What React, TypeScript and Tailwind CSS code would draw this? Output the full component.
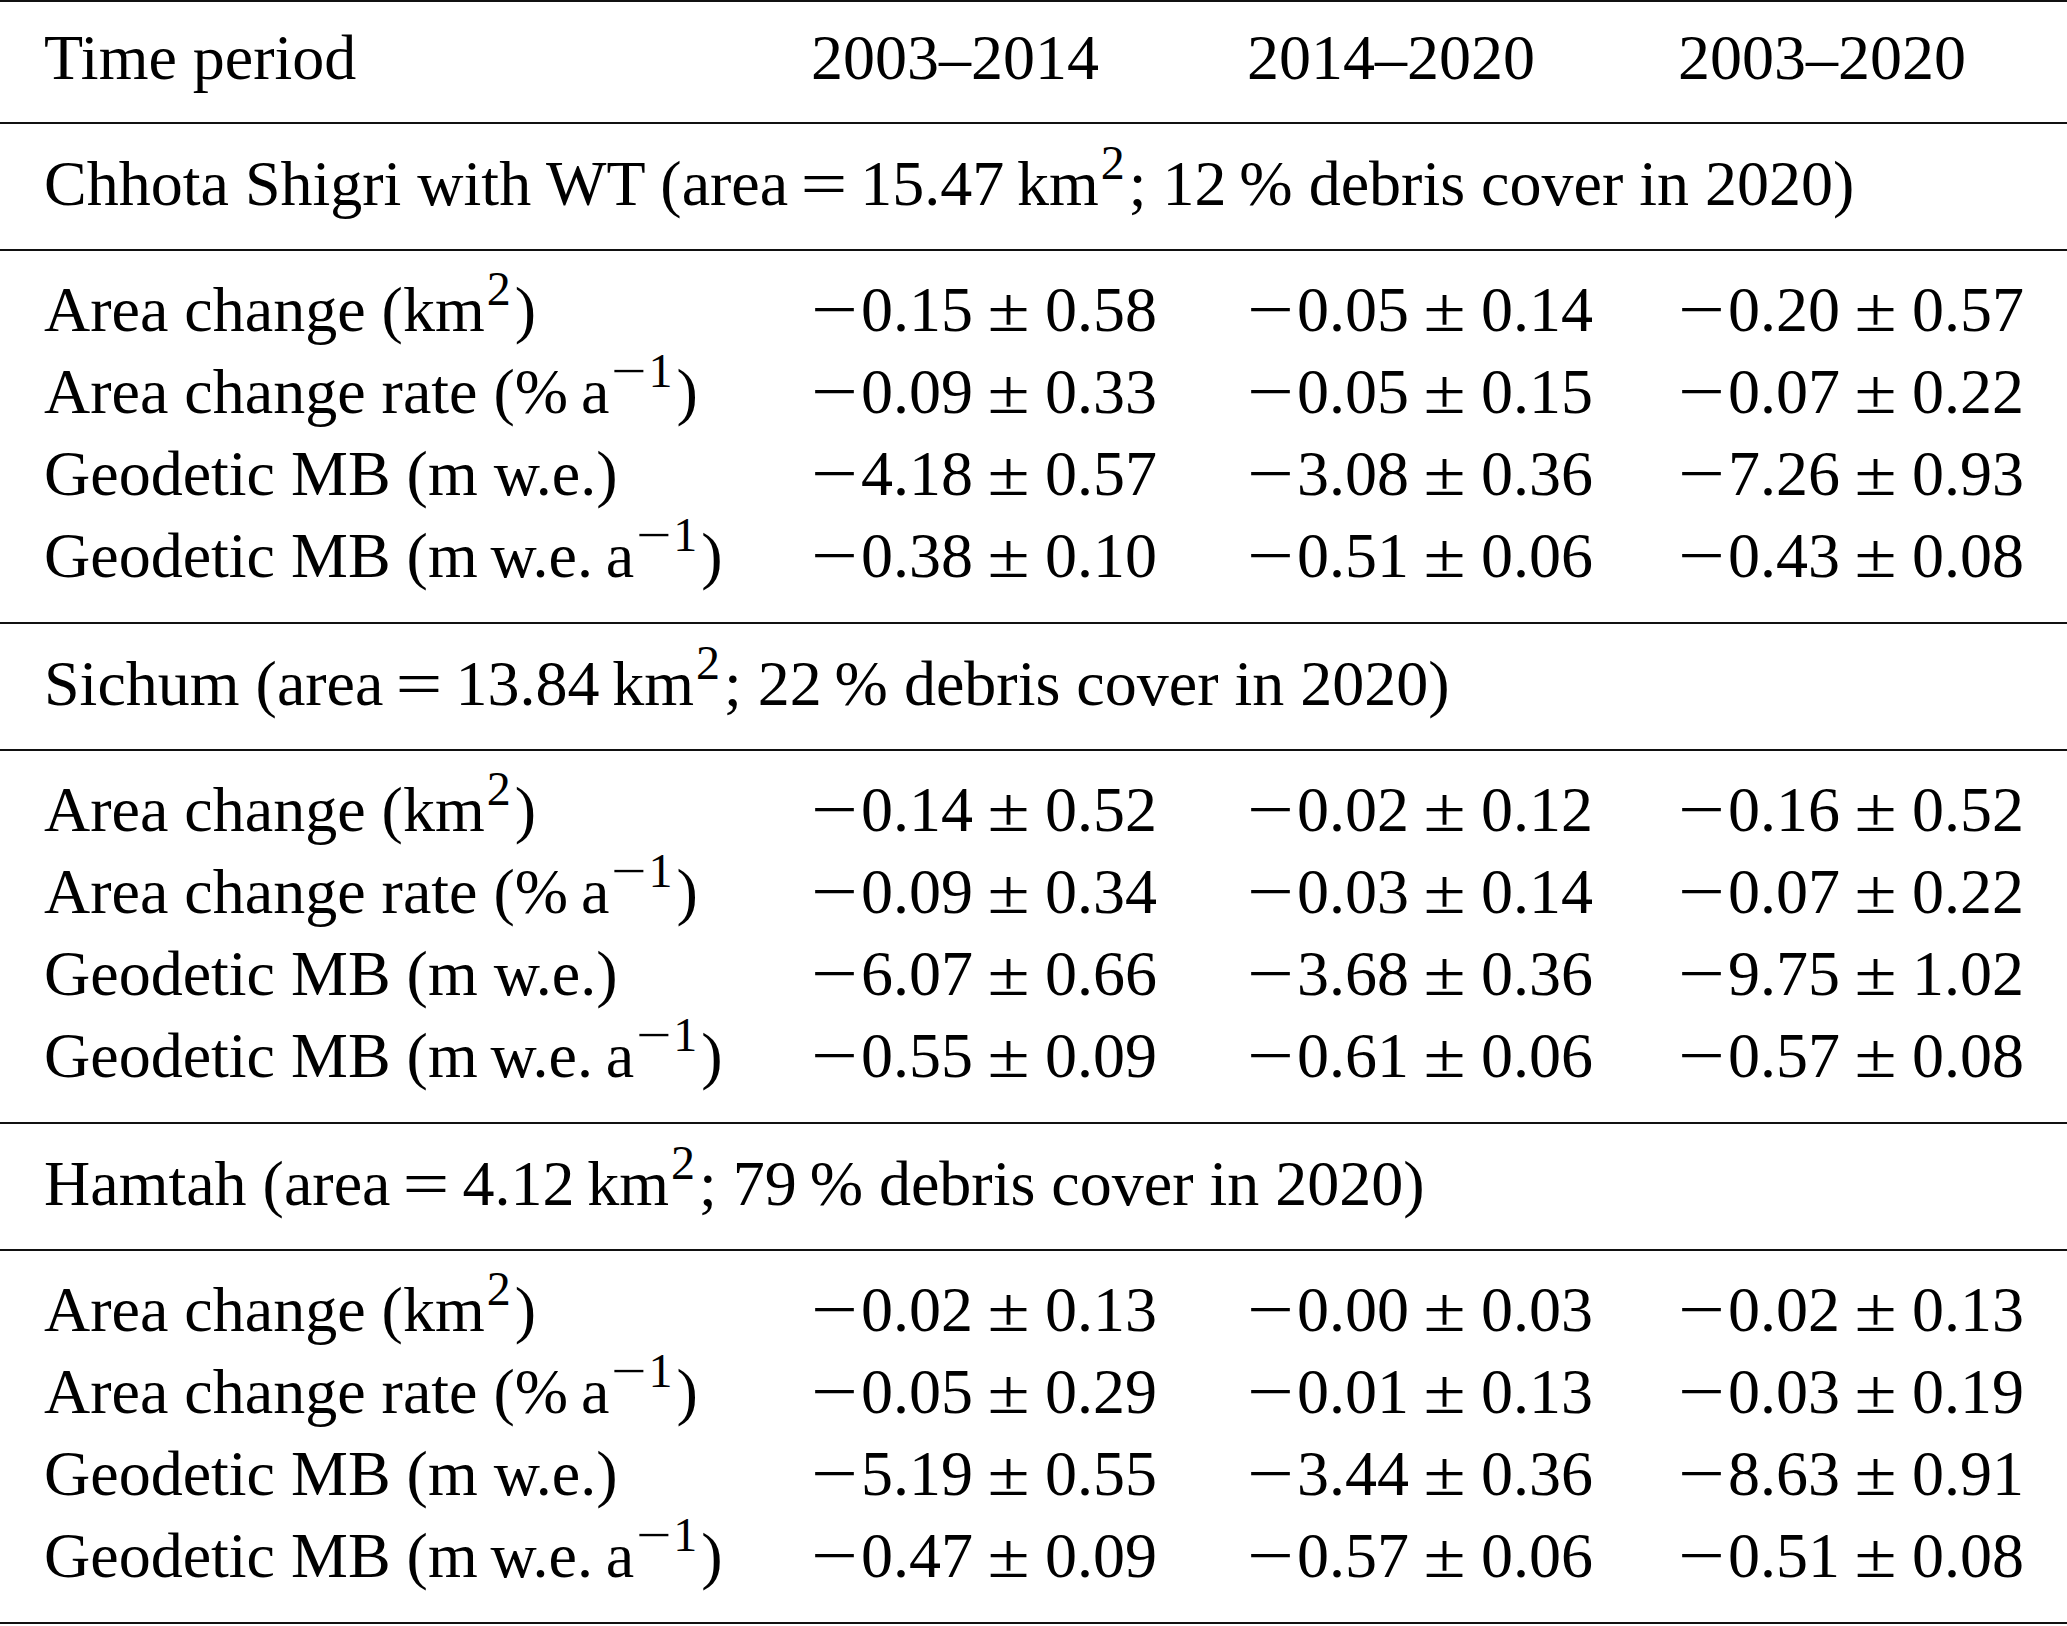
import React from "react";

type Row = { label: React.ReactNode; values: string[][] };
type Section = { title: React.ReactNode; rows: Row[] };

const Sup = ({ children }: { children: React.ReactNode }) => (
  <sup className="text-[75%] top-[-0.55em] ml-[2px] mr-[4px]">{children}</sup>
);

// TeX-like wide minus
const Minus = () => (
  <span className="inline-block w-[50px]">
    <span className="inline-block origin-left scale-x-[1.3]">−</span>
  </span>
);

const PlusMinus = () => (
  <span className="inline-block mx-[14px] w-[44px] text-center">
    <span className="inline-block scale-x-[1.2]">±</span>
  </span>
);

const Eq = () => (
  <span className="inline-block mx-[12px] w-[48px] text-center">
    <span className="inline-block scale-x-[1.3]">=</span>
  </span>
);

const km2 = (
  <>
    km<Sup>2</Sup>
  </>
);
const perA = (
  <>
    a
    <Sup>
      <span className="inline-block origin-left scale-x-[1.3] mr-[10px]">−</span>1
    </Sup>
  </>
);

const labels: React.ReactNode[] = [
  <>Area change ({km2})</>,
  <>Area change rate (%&thinsp;{perA})</>,
  <>Geodetic MB (m w.e.)</>,
  <>Geodetic MB (m&thinsp;w.e.&thinsp;{perA})</>,
];

const sections: Section[] = [
  {
    title: (
      <>
        Chhota Shigri with WT (area<Eq />15.47&thinsp;{km2}; 12&thinsp;% debris cover in 2020)
      </>
    ),
    rows: [
      [["0.15", "0.58"], ["0.05", "0.14"], ["0.20", "0.57"]],
      [["0.09", "0.33"], ["0.05", "0.15"], ["0.07", "0.22"]],
      [["4.18", "0.57"], ["3.08", "0.36"], ["7.26", "0.93"]],
      [["0.38", "0.10"], ["0.51", "0.06"], ["0.43", "0.08"]],
    ].map((v, i) => ({ label: labels[i], values: v })),
  },
  {
    title: (
      <>
        Sichum (area<Eq />13.84&thinsp;{km2}; 22&thinsp;% debris cover in 2020)
      </>
    ),
    rows: [
      [["0.14", "0.52"], ["0.02", "0.12"], ["0.16", "0.52"]],
      [["0.09", "0.34"], ["0.03", "0.14"], ["0.07", "0.22"]],
      [["6.07", "0.66"], ["3.68", "0.36"], ["9.75", "1.02"]],
      [["0.55", "0.09"], ["0.61", "0.06"], ["0.57", "0.08"]],
    ].map((v, i) => ({ label: labels[i], values: v })),
  },
  {
    title: (
      <>
        Hamtah (area<Eq />4.12&thinsp;{km2}; 79&thinsp;% debris cover in 2020)
      </>
    ),
    rows: [
      [["0.02", "0.13"], ["0.00", "0.03"], ["0.02", "0.13"]],
      [["0.05", "0.29"], ["0.01", "0.13"], ["0.03", "0.19"]],
      [["5.19", "0.55"], ["3.44", "0.36"], ["8.63", "0.91"]],
      [["0.47", "0.09"], ["0.57", "0.06"], ["0.51", "0.08"]],
    ].map((v, i) => ({ label: labels[i], values: v })),
  },
];

const Rule = () => <div className="h-[2px] bg-[#111]" />;

const cols = "grid grid-cols-[767px_436px_431px_1fr] pl-[44px]";

export default function App() {
  return (
    <div className="w-[2067px] h-[1626px] bg-white text-black font-['Liberation_Serif','Times_New_Roman',serif] text-[64px] leading-[82px]">
      <Rule />
      <div className={`${cols} pt-[15px] pb-[23px]`}>
        <div>Time period</div>
        <div>2003–2014</div>
        <div>2014–2020</div>
        <div>2003–2020</div>
      </div>
      <Rule />
      {sections.map((s, si) => (
        <div key={si}>
          <div className="pl-[44px] pt-[19px] pb-[24px] whitespace-nowrap">{s.title}</div>
          <Rule />
          <div className="pt-[18px] pb-[25px]">
            {s.rows.map((r, ri) => (
              <div key={ri} className={`${cols} whitespace-nowrap`}>
                <div>{r.label}</div>
                {r.values.map(([a, b], ci) => (
                  <div key={ci}>
                    <Minus />
                    {a}
                    <PlusMinus />
                    {b}
                  </div>
                ))}
              </div>
            ))}
          </div>
          <Rule />
        </div>
      ))}
    </div>
  );
}
